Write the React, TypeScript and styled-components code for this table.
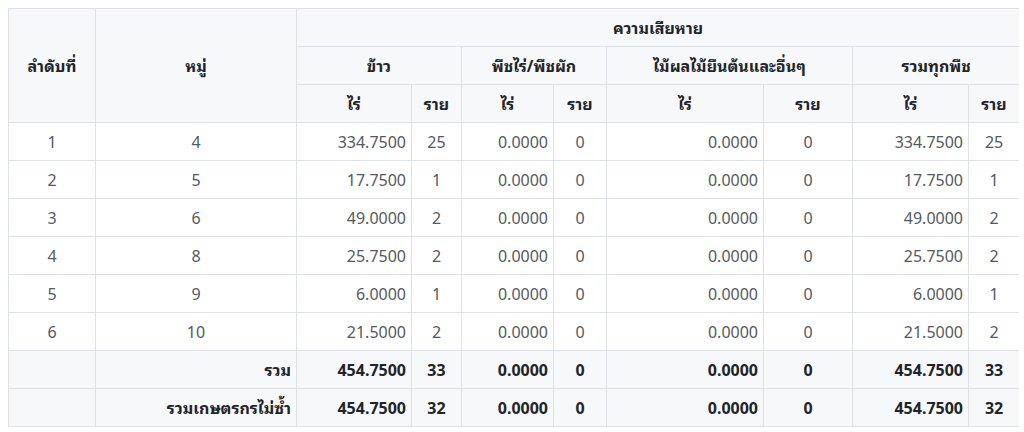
import React from "react";
import styled, { createGlobalStyle } from "styled-components";

const Global = createGlobalStyle`
  body {
    margin: 8px 5px 0 8px;
    background: #ffffff;
    font-family: "Noto Sans", "Noto Sans Thai Looped", "Loma", "Garuda", "Tahoma", sans-serif;
  }
`;

const Table = styled.table`
  width: 1011px;
  border-collapse: collapse;
  table-layout: fixed;
  font-size: 16px;
  line-height: 24px;
  color: #555a60;
`;

const HeadCell = styled.th<{ $align?: string }>`
  border: 1px solid #dee2e6;
  background: #f7f8fa;
  color: #212529;
  font-weight: 700;
  text-align: ${(p) => p.$align || "center"};
  vertical-align: middle;
  height: 38px;
  padding: 0 5px;
  box-sizing: border-box;
`;

const Cell = styled.td<{ $align?: string }>`
  border: 1px solid #dee2e6;
  text-align: ${(p) => p.$align || "center"};
  vertical-align: middle;
  height: 38px;
  padding: 0 5px;
  box-sizing: border-box;
  white-space: nowrap;
`;

const FootCell = styled(Cell)`
  background: #f7f8fa;
  color: #212529;
  font-weight: 700;
`;

type Row = [number, number, string, number, string, number, string, number, string, number];

const rows: Row[] = [
  [1, 4, "334.7500", 25, "0.0000", 0, "0.0000", 0, "334.7500", 25],
  [2, 5, "17.7500", 1, "0.0000", 0, "0.0000", 0, "17.7500", 1],
  [3, 6, "49.0000", 2, "0.0000", 0, "0.0000", 0, "49.0000", 2],
  [4, 8, "25.7500", 2, "0.0000", 0, "0.0000", 0, "25.7500", 2],
  [5, 9, "6.0000", 1, "0.0000", 0, "0.0000", 0, "6.0000", 1],
  [6, 10, "21.5000", 2, "0.0000", 0, "0.0000", 0, "21.5000", 2],
];

const totals: [string, string, number, string, number, string, number, string, number][] = [
  ["รวม", "454.7500", 33, "0.0000", 0, "0.0000", 0, "454.7500", 33],
  ["รวมเกษตรกรไม่ซ้ำ", "454.7500", 32, "0.0000", 0, "0.0000", 0, "454.7500", 32],
];

const widths = [87, 201, 115, 50, 92, 53, 157, 89, 116, 51];

export default function App() {
  return (
    <>
      <Global />
      <Table>
        <colgroup>
          {widths.map((w, i) => (
            <col key={i} style={{ width: w }} />
          ))}
        </colgroup>
        <thead>
          <tr>
            <HeadCell rowSpan={3}>ลำดับที่</HeadCell>
            <HeadCell rowSpan={3}>หมู่</HeadCell>
            <HeadCell colSpan={8}>ความเสียหาย</HeadCell>
          </tr>
          <tr>
            <HeadCell colSpan={2}>ข้าว</HeadCell>
            <HeadCell colSpan={2}>พืชไร่/พืชผัก</HeadCell>
            <HeadCell colSpan={2}>ไม้ผลไม้ยืนต้นและอื่นๆ</HeadCell>
            <HeadCell colSpan={2}>รวมทุกพืช</HeadCell>
          </tr>
          <tr>
            {[0, 1, 2, 3].map((i) => (
              <React.Fragment key={i}>
                <HeadCell>ไร่</HeadCell>
                <HeadCell>ราย</HeadCell>
              </React.Fragment>
            ))}
          </tr>
        </thead>
        <tbody>
          {rows.map((r) => (
            <tr key={r[0]}>
              <Cell>{r[0]}</Cell>
              <Cell>{r[1]}</Cell>
              <Cell $align="right">{r[2]}</Cell>
              <Cell>{r[3]}</Cell>
              <Cell $align="right">{r[4]}</Cell>
              <Cell>{r[5]}</Cell>
              <Cell $align="right">{r[6]}</Cell>
              <Cell>{r[7]}</Cell>
              <Cell $align="right">{r[8]}</Cell>
              <Cell>{r[9]}</Cell>
            </tr>
          ))}
        </tbody>
        <tfoot>
          {totals.map((t) => (
            <tr key={t[0]}>
              <FootCell />
              <FootCell $align="right">{t[0]}</FootCell>
              <FootCell $align="right">{t[1]}</FootCell>
              <FootCell>{t[2]}</FootCell>
              <FootCell $align="right">{t[3]}</FootCell>
              <FootCell>{t[4]}</FootCell>
              <FootCell $align="right">{t[5]}</FootCell>
              <FootCell>{t[6]}</FootCell>
              <FootCell $align="right">{t[7]}</FootCell>
              <FootCell>{t[8]}</FootCell>
            </tr>
          ))}
        </tfoot>
      </Table>
    </>
  );
}
